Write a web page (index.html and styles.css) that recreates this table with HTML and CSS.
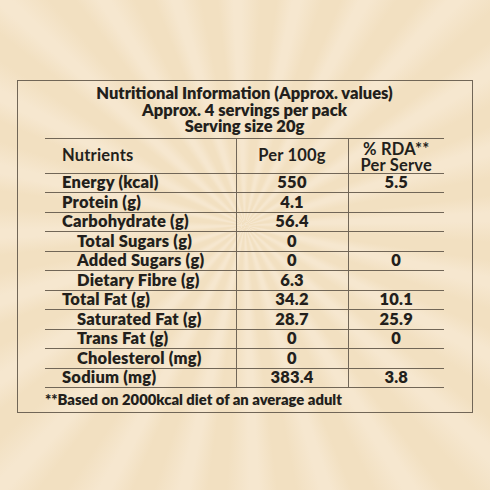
FILE: index.html
```html
<!DOCTYPE html>
<html lang="en">
<head>
    <meta charset="UTF-8">
    <meta name="viewport" content="width=device-width, initial-scale=1.0">
    <title>Nutritional Information</title>
    <link rel="stylesheet" href="styles.css">
</head>
<body>
    <div class="panel">
        <div class="title">
            <p>Nutritional Information (Approx. values)</p>
            <p>Approx. 4 servings per pack</p>
            <p>Serving size 20g</p>
        </div>

        <table class="facts">
            <tr class="head">
                <th class="name">Nutrients</th>
                <th>Per 100g</th>
                <th class="rda">% RDA**<br>Per Serve</th>
            </tr>
            <tr><td class="name">Energy (kcal)</td><td>550</td><td>5.5</td></tr>
            <tr><td class="name">Protein (g)</td><td>4.1</td><td></td></tr>
            <tr><td class="name">Carbohydrate (g)</td><td>56.4</td><td></td></tr>
            <tr><td class="name sub">Total Sugars (g)</td><td>0</td><td></td></tr>
            <tr><td class="name sub">Added Sugars (g)</td><td>0</td><td>0</td></tr>
            <tr><td class="name sub">Dietary Fibre (g)</td><td>6.3</td><td></td></tr>
            <tr><td class="name">Total Fat (g)</td><td>34.2</td><td>10.1</td></tr>
            <tr><td class="name sub">Saturated Fat (g)</td><td>28.7</td><td>25.9</td></tr>
            <tr><td class="name sub">Trans Fat (g)</td><td>0</td><td>0</td></tr>
            <tr><td class="name sub">Cholesterol (mg)</td><td>0</td><td></td></tr>
            <tr><td class="name">Sodium (mg)</td><td>383.4</td><td>3.8</td></tr>
        </table>

        <p class="note">**Based on 2000kcal diet of an average adult</p>
    </div>
</body>
</html>
```

FILE: styles.css
```css
/* General */
* {
    margin: 0;
    padding: 0;
    box-sizing: border-box;
}

body {
    width: 490px;
    height: 490px;
    overflow: hidden;
    font-family: 'Lato', 'Liberation Sans', sans-serif;
    font-weight: 800;
    color: #231f1c;
    background-color: #f3e2c3;
    background-image:
        repeating-conic-gradient(from 4deg at 50% 46%,
            #f2e0c1 0deg,
            #f2e0c1 4deg,
            #f6e7cf 8deg,
            #f6e7cf 10deg,
            #f2e0c1 15deg);
    padding-top: 80px;
}

/* Panel */
.panel {
    width: 456px;
    height: 333px;
    margin: 0 auto;
    border: 1px solid #716657;
    padding: 4px 28px 0 27px;
}

.title {
    text-align: center;
    font-size: 16.5px;
    line-height: 16.5px;
    margin-bottom: 3px;
}

/* Table */
.facts {
    width: 399px;
    border-collapse: collapse;
    font-size: 16.5px;
    letter-spacing: 0.2px;
}

.facts th,
.facts td {
    height: 19.5px;
    line-height: 17px;
    padding: 0;
    text-align: center;
    border-top: 1px solid #716657;
    border-bottom: 1px solid #716657;
}

.facts th + th,
.facts td + td {
    border-left: 1px solid #716657;
}

.facts .head th {
    height: 35px;
}

.facts th:nth-child(1) { width: 191px; }
.facts th:nth-child(2) { width: 112px; }
.facts th:nth-child(3) { width: 96px; }

.facts .name {
    text-align: left;
    padding-left: 17px;
}

.facts .name.sub {
    padding-left: 32px;
}

.facts .rda {
    line-height: 16px;
    padding-top: 2px;
}

.note {
    font-size: 14.8px;
    line-height: 20px;
    margin-top: 1px;
}
```
